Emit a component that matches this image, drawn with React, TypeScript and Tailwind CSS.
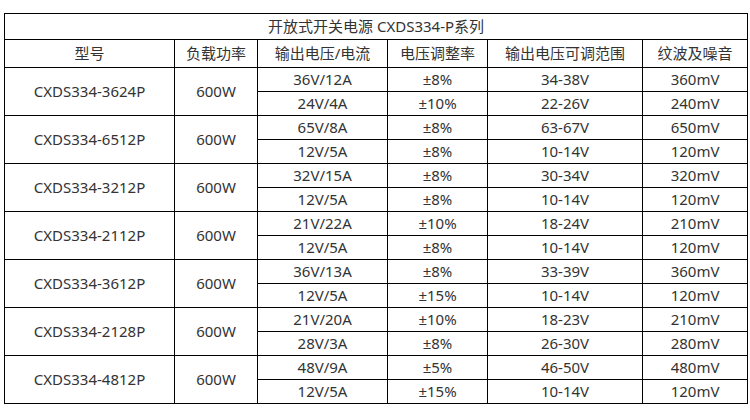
import React from "react";

type Sub = [string, string, string, string];
const groups: { model: string; power: string; rows: Sub[] }[] = [
  { model: "CXDS334-3624P", power: "600W", rows: [["36V/12A", "±8%", "34-38V", "360mV"], ["24V/4A", "±10%", "22-26V", "240mV"]] },
  { model: "CXDS334-6512P", power: "600W", rows: [["65V/8A", "±8%", "63-67V", "650mV"], ["12V/5A", "±8%", "10-14V", "120mV"]] },
  { model: "CXDS334-3212P", power: "600W", rows: [["32V/15A", "±8%", "30-34V", "320mV"], ["12V/5A", "±8%", "10-14V", "120mV"]] },
  { model: "CXDS334-2112P", power: "600W", rows: [["21V/22A", "±10%", "18-24V", "210mV"], ["12V/5A", "±8%", "10-14V", "120mV"]] },
  { model: "CXDS334-3612P", power: "600W", rows: [["36V/13A", "±8%", "33-39V", "360mV"], ["12V/5A", "±15%", "10-14V", "120mV"]] },
  { model: "CXDS334-2128P", power: "600W", rows: [["21V/20A", "±10%", "18-23V", "210mV"], ["28V/3A", "±8%", "26-30V", "280mV"]] },
  { model: "CXDS334-4812P", power: "600W", rows: [["48V/9A", "±5%", "46-50V", "480mV"], ["12V/5A", "±15%", "10-14V", "120mV"]] },
];

const td = "border border-black text-center p-0 align-middle";

export default function App() {
  return (
    <div
      className="w-[750px] h-[420px] bg-white pt-[13px] pl-[4px] text-[#333] text-[15px] leading-none"
      style={{ fontFamily: '"Noto Sans", "Noto Sans CJK SC", sans-serif' }}
    >
      <table className="border-collapse table-fixed w-[743px]">
        <colgroup>
          <col className="w-[170px]" />
          <col className="w-[83px]" />
          <col className="w-[130px]" />
          <col className="w-[100px]" />
          <col className="w-[155px]" />
          <col className="w-[105px]" />
        </colgroup>
        <tbody>
          <tr className="h-[26px]">
            <td colSpan={6} className={td}>开放式开关电源 CXDS334-P系列</td>
          </tr>
          <tr className="h-[28px]">
            <td className={td}>型号</td>
            <td className={td}>负载功率</td>
            <td className={td}>输出电压/电流</td>
            <td className={td}>电压调整率</td>
            <td className={td}>输出电压可调范围</td>
            <td className={td}>纹波及噪音</td>
          </tr>
          {groups.map((g) => (
            <React.Fragment key={g.model}>
              <tr className="h-[24px]">
                <td rowSpan={2} className={td}>{g.model}</td>
                <td rowSpan={2} className={td}>{g.power}</td>
                {g.rows[0].map((c, i) => (
                  <td key={i} className={td}>{c}</td>
                ))}
              </tr>
              <tr className="h-[24px]">
                {g.rows[1].map((c, i) => (
                  <td key={i} className={td}>{c}</td>
                ))}
              </tr>
            </React.Fragment>
          ))}
        </tbody>
      </table>
    </div>
  );
}
